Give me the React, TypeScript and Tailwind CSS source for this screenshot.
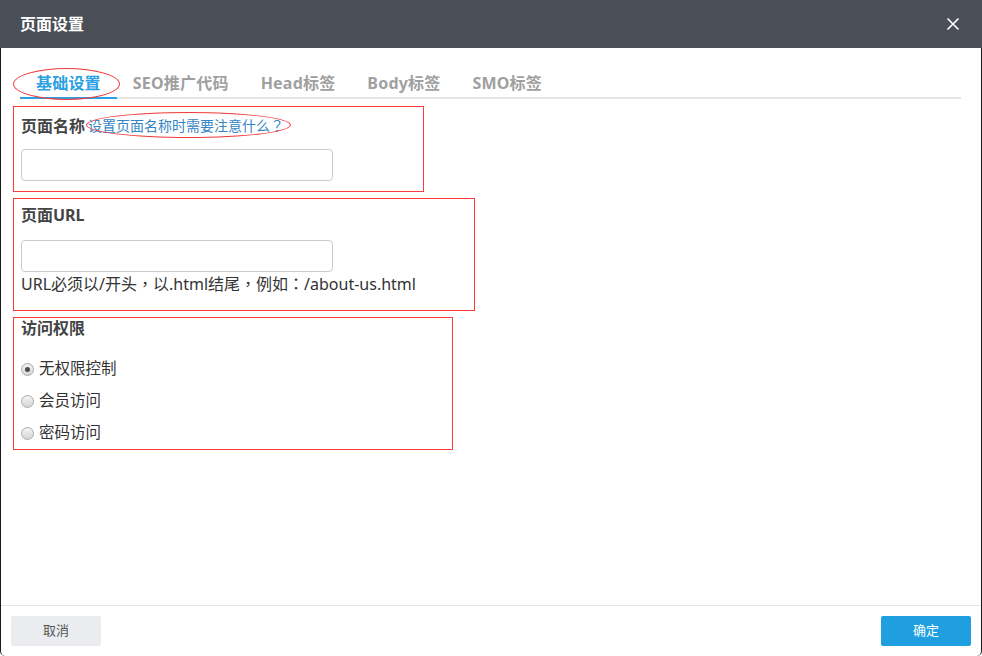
import { useState } from "react";

const tabs = ["基础设置", "SEO推广代码", "Head标签", "Body标签", "SMO标签"];

const options = ["无权限控制", "会员访问", "密码访问"];

// centred full-width punctuation, like the YaHei look of the original
const P = ({ c }: { c: string }) => (
  <span style={{ fontFamily: '"Noto Sans CJK TC", sans-serif' }}>{c}</span>
);

const Radio = ({ checked }: { checked: boolean }) => (
  <span className="relative flex h-[13px] w-[13px] items-center justify-center rounded-full border border-[#a9a9a9] bg-gradient-to-b from-[#f4f4f4] to-[#d6d6d6]">
    {checked && <span className="h-[5px] w-[5px] rounded-full bg-[#4d4d4d]" />}
  </span>
);

const App = () => {
  const [activeTab, setActiveTab] = useState(0);
  const [access, setAccess] = useState(0);

  return (
    <div
      className="flex h-[656px] w-[982px] flex-col overflow-hidden bg-white text-[#333]"
      style={{ fontFamily: '"Noto Sans", "Noto Sans CJK SC", sans-serif' }}
    >
      {/* Header */}
      <div className="flex h-12 shrink-0 items-center justify-between bg-[#4a4e56] pl-[20px] pr-[22px]">
        <h1 className="text-[16px] font-bold text-white">页面设置</h1>
        <button className="text-white">
          <svg width="14" height="14" viewBox="0 0 14 14" fill="none" stroke="currentColor" strokeWidth="1.6">
            <path d="M1.5 1.5l11 11M12.5 1.5l-11 11" />
          </svg>
        </button>
      </div>

      <div className="flex flex-1 flex-col rounded-b-[5px] border-x border-[#1a1a1a]">
        {/* Body */}
        <div className="flex-1 pl-[12px] pr-[20px] pt-[23px]">
          <div className="ml-[7px] flex border-b-2 border-[#e6e6e6]">
            {tabs.map((t, i) => (
              <button
                key={t}
                onClick={() => setActiveTab(i)}
                className={`relative -mb-[2px] border-b-2 px-4 pb-[2px] text-[16px] font-bold leading-[24px] tracking-[0.2px] ${
                  i === activeTab ? "border-[#2ba0e2] text-[#2ba0e2]" : "border-transparent text-[#a0a0a0]"
                }`}
              >
                {t}
                {i === 0 && (
                  <span className="pointer-events-none absolute -left-[7px] -top-[3px] h-[32px] w-[107px] rounded-[50%] border border-[#f03a3a]" />
                )}
              </button>
            ))}
          </div>

          {/* 页面名称 */}
          <div className="mt-[7px] w-[411px] border border-[#ff3b3b] pb-[10px] pl-[7px] pt-[7px]">
            <div className="flex items-center">
              <span className="text-[16px] font-bold leading-[22px] text-[#444]">页面名称</span>
              <span className="relative ml-[3px] text-[14px] leading-[22px] text-[#3585c5]">
                设置页面名称时需要注意什么<P c="？" />
                <span className="pointer-events-none absolute -left-[2px] -top-[2px] h-[26px] w-[205px] rounded-[50%] border border-[#f03a3a]" />
              </span>
            </div>
            <input className="mt-[12px] block h-[32px] w-[312px] rounded-[4px] border border-[#ccc] outline-none" />
          </div>

          {/* 页面URL */}
          <div className="mt-[6px] w-[462px] border border-[#ff3b3b] pb-[15px] pl-[7px] pt-[5px]">
            <div className="text-[16px] font-bold leading-[22px] text-[#444]">页面URL</div>
            <input className="mt-[14px] block h-[32px] w-[312px] rounded-[4px] border border-[#ccc] outline-none" />
            <div className="text-[16px] leading-[22px] text-[#333]">
              URL必须以/开头<P c="，" />以.html结尾<P c="，" />例如<P c="：" />/about-us.html
            </div>
          </div>

          {/* 访问权限 */}
          <div className="mt-[6px] w-[440px] border border-[#ff3b3b] pl-[7px]">
            <div className="text-[16px] font-bold leading-[20px] text-[#444]">访问权限</div>
            <div className="mt-[15px]">
              {options.map((o, i) => (
                <label
                  key={o}
                  onClick={() => setAccess(i)}
                  className="flex h-[32px] cursor-pointer items-center gap-[5px] text-[15.5px] text-[#333]"
                >
                  <Radio checked={access === i} />
                  {o}
                </label>
              ))}
            </div>
          </div>
        </div>

        {/* Footer */}
        <div className="flex h-[51px] shrink-0 items-center justify-between border-t border-[#e5e5e5] px-[10px]">
          <button className="h-[30px] w-[90px] rounded-[2px] bg-[#ebecf0] text-[13px] text-[#555]">取消</button>
          <button className="h-[30px] w-[90px] rounded-[2px] bg-[#1f9fe0] text-[13px] text-white">确定</button>
        </div>
      </div>
    </div>
  );
};

export default App;
